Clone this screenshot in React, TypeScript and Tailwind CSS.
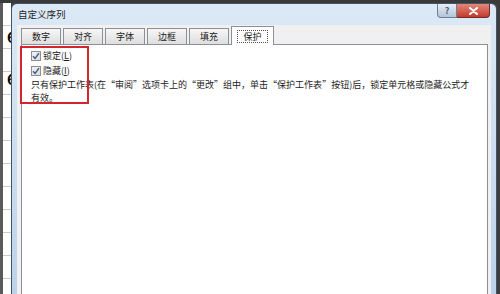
import React from "react";

const tabs = ["数字", "对齐", "字体", "边框", "填充"];

const Check = () => (
  <span className="flex h-[10px] w-[10px] items-center justify-center border border-[#8e8f8f] bg-gradient-to-br from-[#f2f2f2] to-[#dcdcdc]">
    <svg width="8" height="8" viewBox="0 0 8 8">
      <path d="M1 4.2 L3.1 6.4 L7 1.2" fill="none" stroke="#3a5a8c" strokeWidth="1.4" />
    </svg>
  </span>
);

// full-width quote marks, as the dialog's font draws them
const Lq = () => <span className="inline-block w-[9px] text-right">“</span>;
const Rq = () => <span className="inline-block w-[9px] text-left">”</span>;

const Sheet = () => (
  <div className="relative flex w-[11px] flex-col overflow-hidden bg-white border-l-[3px] border-[#5a5a5a]">
    {Array.from({ length: 13 }).map((_, i) => (
      <div key={i} className="h-[23px] shrink-0 border-b border-[#c8ccd2]" />
    ))}
    <span className="absolute left-[4px] top-[26px] text-[15px] font-bold leading-none text-black">6</span>
    <span className="absolute left-[4px] top-[68px] text-[15px] font-bold leading-none text-black">6</span>
  </div>
);

export default function App() {
  return (
    <div className="relative flex h-[294px] w-[500px] flex-col overflow-hidden bg-[#3d3d3d] font-['Noto_Sans_CJK_SC',sans-serif] text-[#1b1b1b]">
      <div className="h-[3px] shrink-0 bg-[#3a3a3a]" />
      <div className="flex flex-1">
        <Sheet />
        {/* dialog */}
        <div className="flex w-[486px] flex-col rounded-t-[6px] border border-[#44556b] bg-gradient-to-b from-[#dce9f6] to-[#bcd2ea]">
          <div className="relative flex h-[21px] shrink-0 items-center pl-[6px]">
            <span className="text-[9.5px] leading-none text-[#1e1e1e]">自定义序列</span>
            <div className="absolute right-[6px] top-0 flex">
              <div className="flex h-[14px] w-[20px] items-center justify-center rounded-bl-[4px] border border-t-0 border-[#6c7f97] bg-gradient-to-b from-[#e6eef7] to-[#b3c5da] text-[9px] font-bold leading-none text-[#4d5f78]">
                ?
              </div>
              <div className="flex h-[14px] w-[33px] items-center justify-center rounded-br-[4px] border border-l-0 border-t-0 border-[#7a2a26] bg-gradient-to-b from-[#e2867c] to-[#c2382c]">
                <svg width="9" height="8" viewBox="0 0 9 8">
                  <path d="M1 1 L8 7 M8 1 L1 7" stroke="white" strokeWidth="2" strokeLinecap="round" />
                </svg>
              </div>
            </div>
          </div>
          <div className="mx-[5px] flex flex-1 flex-col bg-[#f0f0f0] pl-[4px] pr-[3px]">
            {/* tab row */}
            <div className="flex h-[19px] items-end">
              {tabs.map((t) => (
                <div
                  key={t}
                  className="mr-[2px] flex h-[16px] w-[40px] items-center justify-center border border-b-0 border-[#8c8f97] bg-gradient-to-b from-[#f6f6f6] to-[#dedede] text-[9px] leading-none"
                >
                  {t}
                </div>
              ))}
              <div className="relative z-10 -mb-px flex h-[19px] w-[43px] items-center justify-center border border-b-0 border-[#8c8f97] bg-white">
                <span className="border border-dotted border-[#555] px-[5px] text-[9px] leading-[11px]">保护</span>
              </div>
            </div>
            {/* panel */}
            <div className="flex flex-1 flex-col border border-[#8c8f97] bg-white pl-[9px] pt-[3px]">
              <div className="flex h-[15px] items-center gap-[2px] text-[9px] leading-none">
                <Check />
                <span>
                  锁定(<span className="underline">L</span>)
                </span>
              </div>
              <div className="flex h-[15px] items-center gap-[2px] text-[9px] leading-none">
                <Check />
                <span>
                  隐藏(<span className="underline">I</span>)
                </span>
              </div>
              <div className="text-[9px] leading-[13px]">
                <div className="whitespace-nowrap">
                  只有保护工作表(在<Lq />审阅<Rq />选项卡上的<Lq />更改<Rq />组中，单击<Lq />保护工作表<Rq />按钮)后，锁定单元格或隐藏公式才
                </div>
                <div>有效。</div>
              </div>
            </div>
          </div>
        </div>
        <div className="w-[3px] bg-[#3d3d3d]" />
      </div>
      {/* red annotation box */}
      <div className="absolute left-[20px] top-[46px] h-[58px] w-[69px] border-2 border-[#d3262c]" />
    </div>
  );
}
